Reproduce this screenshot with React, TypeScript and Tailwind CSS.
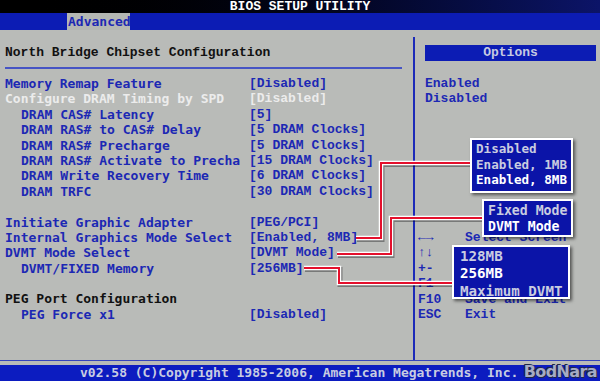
import type { ReactNode } from 'react'

type Row = { label: string; value?: string; indent?: boolean; tone?: 'blue' | 'white' | 'black' }

const ROWS: Row[] = [
  { label: 'Memory Remap Feature', value: '[Disabled]' },
  { label: 'Configure DRAM Timing by SPD', value: '[Disabled]', tone: 'white' },
  { label: 'DRAM CAS# Latency', value: '[5]', indent: true },
  { label: 'DRAM RAS# to CAS# Delay', value: '[5 DRAM Clocks]', indent: true },
  { label: 'DRAM RAS# Precharge', value: '[5 DRAM Clocks]', indent: true },
  { label: 'DRAM RAS# Activate to Precha', value: '[15 DRAM Clocks]', indent: true },
  { label: 'DRAM Write Recovery Time', value: '[6 DRAM Clocks]', indent: true },
  { label: 'DRAM TRFC', value: '[30 DRAM Clocks]', indent: true },
  { label: '' },
  { label: 'Initiate Graphic Adapter', value: '[PEG/PCI]' },
  { label: 'Internal Graphics Mode Select', value: '[Enabled, 8MB]' },
  { label: 'DVMT Mode Select', value: '[DVMT Mode]' },
  { label: 'DVMT/FIXED Memory', value: '[256MB]', indent: true },
  { label: '' },
  { label: 'PEG Port Configuration', tone: 'black' },
  { label: 'PEG Force x1', value: '[Disabled]', indent: true },
]

// descriptions hidden behind the popups are left out
const HELP: [string, string][] = [
  ['←→', 'Select Screen'],
  ['↑↓', ''],
  ['+-', ''],
  ['F1', ''],
  ['F10', 'Save and Exit'],
  ['ESC', 'Exit'],
]

const toneClass = {
  blue: 'text-[#1c28b4]',
  white: 'text-[#ececec]',
  black: 'text-[#111111]',
}

// popup with the option list
function Popup({ className, children }: { className: string; children: ReactNode }) {
  return (
    <div
      className={`absolute border-2 border-white bg-[#0b14a8] shadow-[2px_2px_3px_rgba(0,0,0,0.55)] font-['DejaVu_Sans_Mono',monospace] font-bold ${className}`}
    >
      {children}
    </div>
  )
}

function Connector({ points }: { points: string }) {
  return (
    <>
      <polyline points={points} transform="translate(1,1.5)" fill="none" stroke="rgba(0,0,0,0.35)" strokeWidth="5" />
      <polyline points={points} fill="none" stroke="#ffffff" strokeWidth="4.5" />
      <polyline points={points} fill="none" stroke="#e4102c" strokeWidth="2" />
    </>
  )
}

export default function App() {
  return (
    <div className="relative w-[600px] h-[381px] overflow-hidden bg-[#b9bbb8] font-['DejaVu_Sans_Mono',monospace] text-[13px] font-bold">
      {/* title */}
      <div className="h-[13px] bg-gradient-to-r from-[#000000] via-[#020418] to-[#0c1468] flex items-center justify-center">
        <span className="font-['Liberation_Mono',monospace] text-white leading-[13px]">BIOS SETUP UTILITY</span>
      </div>

      {/* tabs */}
      <div className="h-[17px] bg-[#0c1cb4] flex">
        <div className="ml-[67px] w-[63px] bg-[#b4b7b3] text-[#1c28b4] leading-[17px] pl-[1px]">Advanced</div>
      </div>

      {/* body */}
      <div className="flex h-[330px]">
        <div className="w-[413px]">
          <div className="h-[46px] pt-[15px]">
            <div className="pl-[5px] leading-[15.4px] text-[#111111] font-['Liberation_Mono',monospace]">North Bridge Chipset Configuration</div>
            <div className="ml-[5px] mt-[7px] w-[397px] h-[2px] bg-[#4654c4]" />
          </div>
          {ROWS.map((r, i) => (
            <div key={i} className={`flex h-[15.4px] leading-[15.4px] whitespace-pre ${toneClass[r.tone ?? 'blue']}`}>
              <div className={`w-[249px] ${r.indent ? 'pl-[21px]' : 'pl-[5px]'}`}>{r.label}</div>
              {r.value && <div className="font-['Liberation_Mono',monospace]">{r.value}</div>}
            </div>
          ))}
        </div>

        <div className="w-[2px] mt-[7px] bg-[#1c2ab8]" />

        <div className="flex-1 font-['Liberation_Mono',monospace] text-[#1c28b4]">
          <div className="h-[46px] pt-[15px] pl-[10px] pr-[4px]">
            <div className="h-[16px] bg-[#0c1cb4] text-[#c6cae2] text-center leading-[16px]">Options</div>
          </div>
          <div className="pl-[10px] leading-[15.4px]">
            <div>Enabled</div>
            <div>Disabled</div>
          </div>
          <div className="h-[123.2px]" />
          {HELP.map(([k, d]) => (
            <div key={k} className="flex h-[15.4px] leading-[15.4px] whitespace-pre">
              <div className="w-[50px] pl-[3px]">{k}</div>
              {d && <div>{d}</div>}
            </div>
          ))}
        </div>
      </div>

      {/* footer */}
      <div className="h-[1px] bg-[#3444bc]" />
      <div className="h-[4px]" />
      <div className="relative h-[16px] bg-[#0c1cc0] flex items-center">
        <span className="ml-[80px] text-[#c8cce2] leading-[16px]">v02.58 (C)Copyright 1985-2006, American Megatrends, Inc.</span>
        <span className="absolute right-[3px] top-[-3px] font-['DejaVu_Sans',sans-serif] text-[16px] leading-[19px] font-bold tracking-[-0.6px] text-[#a6abc4] [text-shadow:0_0_1px_#202848,1px_1px_0_#202848,-1px_-1px_0_#202848]">
          BodNara
        </span>
      </div>

      {/* connector lines */}
      <svg className="absolute left-0 top-0 pointer-events-none" width="600" height="381">
        <Connector points="356,238 381,238 381,163 471,163" />
        <Connector points="337,254 391,254 391,218 482,218" />
        <Connector points="304,268 339,268 339,283 452,283" />
      </svg>

      {/* option popups */}
      <Popup className="left-[470px] top-[138px] w-[103px] h-[55px] pl-[4px] pt-[1px] text-[12.6px] leading-[15.5px]">
        <div className="text-[#c9cce0]">Disabled</div>
        <div className="text-[#c9cce0]">Enabled, 1MB</div>
        <div className="text-white">Enabled, 8MB</div>
      </Popup>
      <Popup className="left-[482px] top-[199px] w-[91px] h-[38px] pl-[4px] pt-[2px] text-[13.2px] leading-[16px]">
        <div className="text-[#c9cce0]">Fixed Mode</div>
        <div className="text-white">DVMT Mode</div>
      </Popup>
      <Popup className="left-[452px] top-[245px] w-[118px] h-[54px] pl-[6px] pt-[1px] text-[14.2px] leading-[17.3px]">
        <div className="text-[#c9cce0]">128MB</div>
        <div className="text-white">256MB</div>
        <div className="text-[#c9cce0]">Maximum DVMT</div>
      </Popup>
    </div>
  )
}
